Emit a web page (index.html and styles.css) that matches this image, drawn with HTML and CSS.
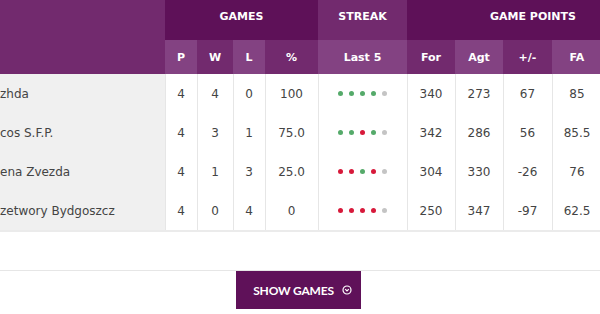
FILE: index.html
```html
<!DOCTYPE html>
<html>
<head>
<meta charset="utf-8">
<link rel="stylesheet" href="styles.css">
</head>
<body>
<div class="page">
  <table class="standings">
    <colgroup>
      <col class="c-name"><col class="c-p"><col class="c-w"><col class="c-l"><col class="c-pct"><col class="c-streak"><col class="c-for"><col class="c-agt"><col class="c-diff"><col class="c-fa"><col class="c-extra">
    </colgroup>
    <thead>
      <tr class="group-row">
        <th class="h-name" rowspan="2"></th>
        <th class="h-dark" colspan="4">GAMES</th>
        <th class="h-mid">STREAK</th>
        <th class="h-dark" colspan="5">GAME POINTS</th>
      </tr>
      <tr class="sub-row">
        <th class="h-light">P</th>
        <th class="h-mid">W</th>
        <th class="h-light">L</th>
        <th class="h-mid">%</th>
        <th class="h-light">Last 5</th>
        <th class="h-mid">For</th>
        <th class="h-light">Agt</th>
        <th class="h-mid">+/-</th>
        <th class="h-light">FA</th>
        <th class="h-mid"></th>
      </tr>
    </thead>
    <tbody>
      <tr>
        <td class="name">zhda</td>
        <td>4</td><td>4</td><td>0</td><td>100</td>
        <td class="streak"><span class="dot win"></span><span class="dot win"></span><span class="dot win"></span><span class="dot win"></span><span class="dot none"></span></td>
        <td>340</td><td>273</td><td>67</td><td>85</td><td></td>
      </tr>
      <tr>
        <td class="name">cos S.F.P.</td>
        <td>4</td><td>3</td><td>1</td><td>75.0</td>
        <td class="streak"><span class="dot win"></span><span class="dot win"></span><span class="dot loss"></span><span class="dot win"></span><span class="dot none"></span></td>
        <td>342</td><td>286</td><td>56</td><td>85.5</td><td></td>
      </tr>
      <tr>
        <td class="name">ena Zvezda</td>
        <td>4</td><td>1</td><td>3</td><td>25.0</td>
        <td class="streak"><span class="dot loss"></span><span class="dot loss"></span><span class="dot win"></span><span class="dot loss"></span><span class="dot none"></span></td>
        <td>304</td><td>330</td><td>-26</td><td>76</td><td></td>
      </tr>
      <tr>
        <td class="name">zetwory Bydgoszcz</td>
        <td>4</td><td>0</td><td>4</td><td>0</td>
        <td class="streak"><span class="dot loss"></span><span class="dot loss"></span><span class="dot loss"></span><span class="dot loss"></span><span class="dot none"></span></td>
        <td>250</td><td>347</td><td>-97</td><td>62.5</td><td></td>
      </tr>
    </tbody>
  </table>
  <div class="actions">
    <button class="show-games">SHOW GAMES
      <svg class="icon" width="10" height="10" viewBox="0 0 10 10"><circle cx="5" cy="5" r="4" fill="none" stroke="#fff" stroke-width="1.2"/><path d="M3.2 4.2 L5 6 L6.8 4.2" fill="none" stroke="#fff" stroke-width="1.2"/></svg>
    </button>
  </div>
</div>
</body>
</html>
```
FILE: styles.css
```css
html, body {
  margin: 0;
  padding: 0;
  background: #fff;
  overflow: hidden;
}
.page {
  width: 600px;
  overflow: hidden;
}
.standings {
  border-collapse: collapse;
  table-layout: fixed;
  width: 659px;
  font-family: "DejaVu Sans", Verdana, sans-serif;
}
.c-name { width: 165px; }
.c-p { width: 32px; }
.c-w { width: 36px; }
.c-l { width: 32px; }
.c-pct { width: 53px; }
.c-streak { width: 89px; }
.c-for { width: 48px; }
.c-agt { width: 48px; }
.c-diff { width: 49px; }
.c-fa { width: 50px; }
.c-extra { width: 57px; }

.standings th {
  color: #fff;
  font-weight: bold;
  font-size: 11px;
  padding: 0;
  text-align: center;
  vertical-align: middle;
}
.group-row th {
  height: 33px;
  padding-bottom: 7px;
}
.sub-row th {
  height: 34px;
}
.h-name { background: #722a6e; }
.h-dark { background: #5e1158; }
.h-mid { background: #722a6e; }
.h-light { background: #834282; }

.standings td {
  height: 39px;
  padding: 0;
  font-size: 12px;
  color: #444;
  text-align: center;
  vertical-align: middle;
  background: #fff;
  border-left: 1px solid #e6e6e6;
  white-space: nowrap;
  overflow: hidden;
}
.standings td.name {
  background: #f0f0f0;
  text-align: left;
  border-left: none;
  padding-left: 0;
}
.standings tbody tr:last-child td {
  border-bottom: 2px solid #ebebeb;
}
.streak {
  line-height: 0;
}
.dot {
  display: inline-block;
  width: 5px;
  height: 5px;
  border-radius: 50%;
  margin: 0 3px;
  vertical-align: middle;
}
.win { background: #55aa6a; }
.loss { background: #d7193a; }
.none { background: #c4c4c4; }

.actions {
  margin-top: 38px;
  border-top: 1px solid #e6e6e6;
  display: flex;
  justify-content: center;
}
.show-games {
  width: 125px;
  height: 38px;
  margin-right: 3px;
  border: none;
  background: #5f1159;
  color: #fff;
  font-family: Lato, "Open Sans", sans-serif;
  font-weight: bold;
  font-size: 12px;
  letter-spacing: -0.2px;
  display: flex;
  align-items: center;
  justify-content: center;
  gap: 8px;
  padding: 0 0 0 8px;
  cursor: pointer;
}
.icon {
  display: block;
}
```
